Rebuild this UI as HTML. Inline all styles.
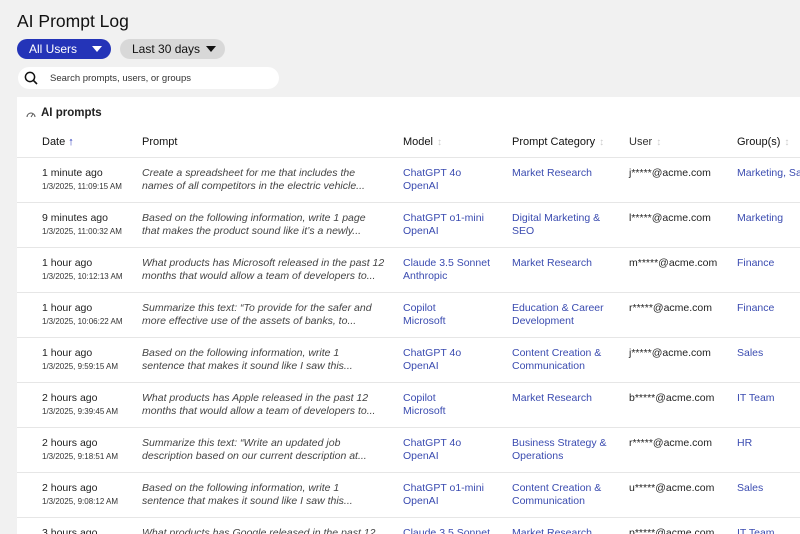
<!DOCTYPE html>
<html><head><style>
*{margin:0;padding:0;box-sizing:border-box}
html,body{width:800px;height:534px;overflow:hidden}
body{background:#f1f1f1;font-family:"Liberation Sans",sans-serif;color:#222;position:relative}
h1{position:absolute;left:17px;top:11px;font-size:17.5px;font-weight:400;color:#111}
.pill{position:absolute;top:39px;height:20px;border-radius:10px;font-size:12px;line-height:20px;padding-left:12px}
.tri{position:absolute;top:7px;width:0;height:0;border-left:5px solid transparent;border-right:5px solid transparent}
.search{position:absolute;left:18px;top:67px;width:261px;height:22px;background:#fff;border-radius:11px;font-size:9.5px;line-height:23px;padding-left:32px;color:#333}
.card{position:absolute;left:17px;top:97px;width:783px;height:437px;background:#fff;overflow:hidden}
.t{position:absolute;font-size:11px;white-space:nowrap}
.row{position:absolute;left:0;width:783px;height:45px;border-top:1.5px solid #e6e6e6}
.c{position:absolute;top:9px;font-size:10.5px;line-height:12.5px;white-space:nowrap}
.d2{font-size:8px;color:#333}
.p{font-style:italic;color:#444}
.l{color:#3a4bb0}
.h{position:absolute;top:39px;font-size:11px;color:#111}
.s{color:#ccc;margin-left:4px;font-size:10px}
</style></head><body>
<h1>AI Prompt Log</h1>
<div class="pill" style="left:17px;width:94px;background:#2434b8;color:#fff">All Users<span class="tri" style="left:75px;border-top:6px solid #fff"></span></div>
<div class="pill" style="left:120px;width:105px;background:#d8d8d8;color:#111">Last 30 days<span class="tri" style="left:86px;border-top:6px solid #111"></span></div>
<div class="search"><svg style="position:absolute;left:6px;top:4px" width="14" height="14" viewBox="0 0 14 14"><circle cx="6" cy="6" r="4.6" fill="none" stroke="#111" stroke-width="1.5"/><path d="M9.3 9.3L13 13" stroke="#111" stroke-width="1.6"/></svg>Search prompts, users, or groups</div>
<div class="card">
<svg style="position:absolute;left:9px;top:13px" width="10" height="8" viewBox="0 0 10 8"><path d="M1 7A4 4 0 0 1 9 7" fill="none" stroke="#555" stroke-width="1"/><path d="M5 7L7 4" stroke="#555"/></svg>
<div class="t" style="left:24px;top:10px;font-weight:700;font-size:11.5px">AI prompts</div>
<div class="h" style="left:25px">Date <span style="color:#2434b8;font-weight:700">↑</span></div>
<div class="h" style="left:125px">Prompt</div>
<div class="h" style="left:386px">Model<span class="s">↕</span></div>
<div class="h" style="left:495px">Prompt Category<span class="s">↕</span></div>
<div class="h" style="left:612px;color:#333">User<span class="s">↕</span></div>
<div class="h" style="left:720px">Group(s)<span class="s">↕</span></div>
<div id="rows"></div>
</div>
<script>
var R=[["1 minute ago","1/3/2025, 11:09:15 AM","Create a spreadsheet for me that includes the","names of all competitors in the electric vehicle...","ChatGPT 4o","OpenAI","Market Research","","j*****@acme.com","Marketing, Sa"],
["9 minutes ago","1/3/2025, 11:00:32 AM","Based on the following information, write 1 page","that makes the product sound like it’s a newly...","ChatGPT o1-mini","OpenAI","Digital Marketing &","SEO","l*****@acme.com","Marketing"],
["1 hour ago","1/3/2025, 10:12:13 AM","What products has Microsoft released in the past 12","months that would allow a team of developers to...","Claude 3.5 Sonnet","Anthropic","Market Research","","m*****@acme.com","Finance"],
["1 hour ago","1/3/2025, 10:06:22 AM","Summarize this text: “To provide for the safer and","more effective use of the assets of banks, to...","Copilot","Microsoft","Education & Career","Development","r*****@acme.com","Finance"],
["1 hour ago","1/3/2025, 9:59:15 AM","Based on the following information, write 1","sentence that makes it sound like I saw this...","ChatGPT 4o","OpenAI","Content Creation &","Communication","j*****@acme.com","Sales"],
["2 hours ago","1/3/2025, 9:39:45 AM","What products has Apple released in the past 12","months that would allow a team of developers to...","Copilot","Microsoft","Market Research","","b*****@acme.com","IT Team"],
["2 hours ago","1/3/2025, 9:18:51 AM","Summarize this text: “Write an updated job","description based on our current description at...","ChatGPT 4o","OpenAI","Business Strategy &","Operations","r*****@acme.com","HR"],
["2 hours ago","1/3/2025, 9:08:12 AM","Based on the following information, write 1","sentence that makes it sound like I saw this...","ChatGPT o1-mini","OpenAI","Content Creation &","Communication","u*****@acme.com","Sales"],
["3 hours ago","1/3/2025, 8:58:01 AM","What products has Google released in the past 12","months that would allow a team of developers to...","Claude 3.5 Sonnet","Anthropic","Market Research","","p*****@acme.com","IT Team"]];
var h="";R.forEach(function(r,i){h+='<div class="row" style="top:'+(60+i*45)+'px">'+
'<div class="c" style="left:25px">'+r[0]+'<br><span class="d2">'+r[1]+'</span></div>'+
'<div class="c p" style="left:125px">'+r[2]+'<br>'+r[3]+'</div>'+
'<div class="c l" style="left:386px">'+r[4]+'<br>'+r[5]+'</div>'+
'<div class="c l" style="left:495px">'+r[6]+'<br>'+r[7]+'</div>'+
'<div class="c" style="left:612px">'+r[8]+'</div>'+
'<div class="c l" style="left:720px">'+r[9]+'</div></div>'});
document.getElementById("rows").innerHTML=h;
</script>
</body></html>
